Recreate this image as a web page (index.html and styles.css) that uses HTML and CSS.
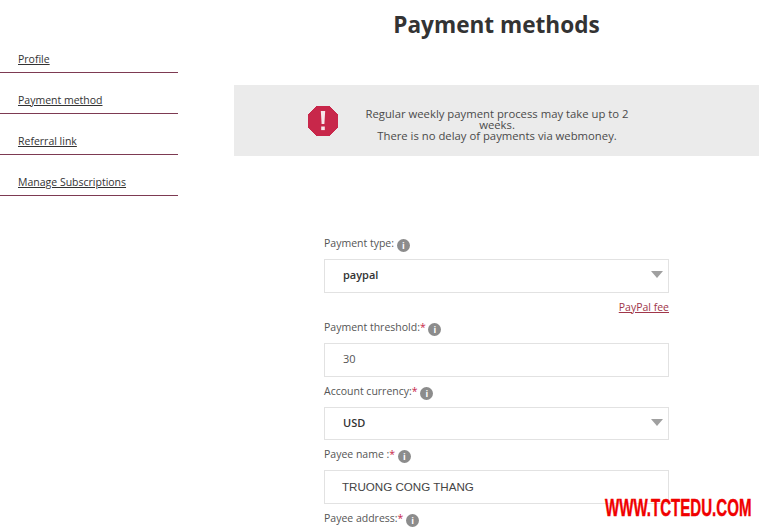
FILE: index.html
```html
<!DOCTYPE html>
<html lang="en">
<head>
    <meta charset="UTF-8">
    <meta name="viewport" content="width=device-width, initial-scale=1.0">
    <title>Payment methods</title>
    <link rel="stylesheet" href="styles.css">
</head>
<body>
    <div class="page">
        <nav class="sidebar">
            <a class="side-link" href="#">Profile</a>
            <a class="side-link" href="#">Payment method</a>
            <a class="side-link" href="#">Referral link</a>
            <a class="side-link" href="#">Manage Subscriptions</a>
        </nav>

        <main class="content">
            <h1 class="title">Payment methods</h1>

            <div class="notice">
                <svg class="notice-icon" viewBox="0 0 30 30" width="30" height="30">
                    <polygon points="9,0 21,0 30,9 30,21 21,30 9,30 0,21 0,9" fill="#c8274a" stroke="#c8274a" stroke-width="1" stroke-linejoin="round"/>
                    <path d="M12.8 5h4.4l-.8 13h-2.8z" fill="#f6e6ea"/>
                    <rect x="13.2" y="20.5" width="3.6" height="3.6" fill="#f6e6ea"/>
                </svg>
                <p class="notice-text">Regular weekly payment process may take up to 2 weeks.<br>There is no delay of payments via webmoney.</p>
            </div>

            <form class="form">
                <div class="field">
                    <label class="field-label">Payment type: <span class="info">i</span></label>
                    <div class="select">paypal</div>
                    <a class="fee-link" href="#">PayPal fee</a>
                </div>
                <div class="field">
                    <label class="field-label">Payment threshold:<span class="req">*</span> <span class="info">i</span></label>
                    <div class="input input-num">30</div>
                </div>
                <div class="field">
                    <label class="field-label">Account currency:<span class="req">*</span> <span class="info">i</span></label>
                    <div class="select">USD</div>
                </div>
                <div class="field">
                    <label class="field-label">Payee name :<span class="req">*</span> <span class="info">i</span></label>
                    <div class="input input-name">TRUONG CONG THANG</div>
                </div>
                <div class="field">
                    <label class="field-label">Payee address:<span class="req">*</span> <span class="info">i</span></label>
                </div>
            </form>
        </main>
    </div>

    <div class="watermark">WWW.TCTEDU.COM</div>
</body>
</html>
```

FILE: styles.css
```css
* {
    margin: 0;
    padding: 0;
    box-sizing: border-box;
}

html, body {
    height: 531px;
    overflow: hidden;
}

body {
    font-family: 'Open Sans', sans-serif;
    font-size: 10.5px;
    color: #444;
    background: #fff;
    position: relative;
}

.page {
    display: flex;
    padding-right: 4px;
}

.sidebar {
    width: 178px;
    flex-shrink: 0;
    padding-top: 32px;
    margin-right: 56px;
}

.side-link {
    display: block;
    height: 41px;
    padding: 20px 0 0 18px;
    line-height: 14px;
    color: #333;
    border-bottom: 1px solid #7d3a52;
    text-decoration: underline;
}

.content {
    flex: 1;
}

.title {
    font-size: 22.6px;
    font-weight: 700;
    line-height: 32px;
    color: #333;
    text-align: center;
    padding-top: 9px;
    height: 85px;
}

.notice {
    height: 71px;
    background: #ebebeb;
    display: flex;
    align-items: center;
    padding-left: 74px;
}

.notice-icon {
    flex-shrink: 0;
}

.notice-text {
    width: 270px;
    margin-left: 24px;
    margin-top: 7px;
    font-size: 11.3px;
    text-align: center;
    line-height: 11px;
    color: #4a4a4a;
}

.form {
    width: 345px;
    margin: 80px 0 0 90px;
}

.field {
    margin-bottom: 7px;
}

.field-label {
    display: block;
    height: 23px;
    line-height: 15px;
    color: #555;
}

.req {
    color: #c8274a;
}

.info {
    display: inline-block;
    width: 13px;
    height: 13px;
    border-radius: 50%;
    background: #8c8c8c;
    color: #fff;
    font-size: 9px;
    font-weight: 700;
    line-height: 13px;
    text-align: center;
    vertical-align: -2px;
}

.select, .input {
    height: 33.5px;
    border: 1px solid #e2e2e2;
    line-height: 30px;
    padding-left: 18px;
    color: #333;
    background: #fff;
    font-size: 11px;
}

.select {
    font-weight: 600;
    position: relative;
}

.select::after {
    content: "";
    position: absolute;
    right: 5px;
    top: 11px;
    border-left: 6px solid transparent;
    border-right: 6px solid transparent;
    border-top: 7px solid #a0a0a0;
}

.input-num {
    color: #555;
}

.input-name {
    font-family: 'Liberation Sans', sans-serif;
    font-size: 11.6px;
    line-height: 31px;
    padding-left: 17px;
    color: #444;
}

.fee-link {
    display: block;
    text-align: right;
    color: #a0364a;
    line-height: 14px;
    margin-top: 7px;
    margin-bottom: -0.5px;
}

.watermark {
    position: absolute;
    left: 605px;
    top: 495px;
    white-space: nowrap;
    font-family: 'Liberation Sans', sans-serif;
    font-size: 23px;
    font-weight: 700;
    line-height: 26px;
    color: #f00000;
    -webkit-text-stroke: 0.4px #f00000;
    transform: scaleX(0.655);
    transform-origin: left center;
}
```
